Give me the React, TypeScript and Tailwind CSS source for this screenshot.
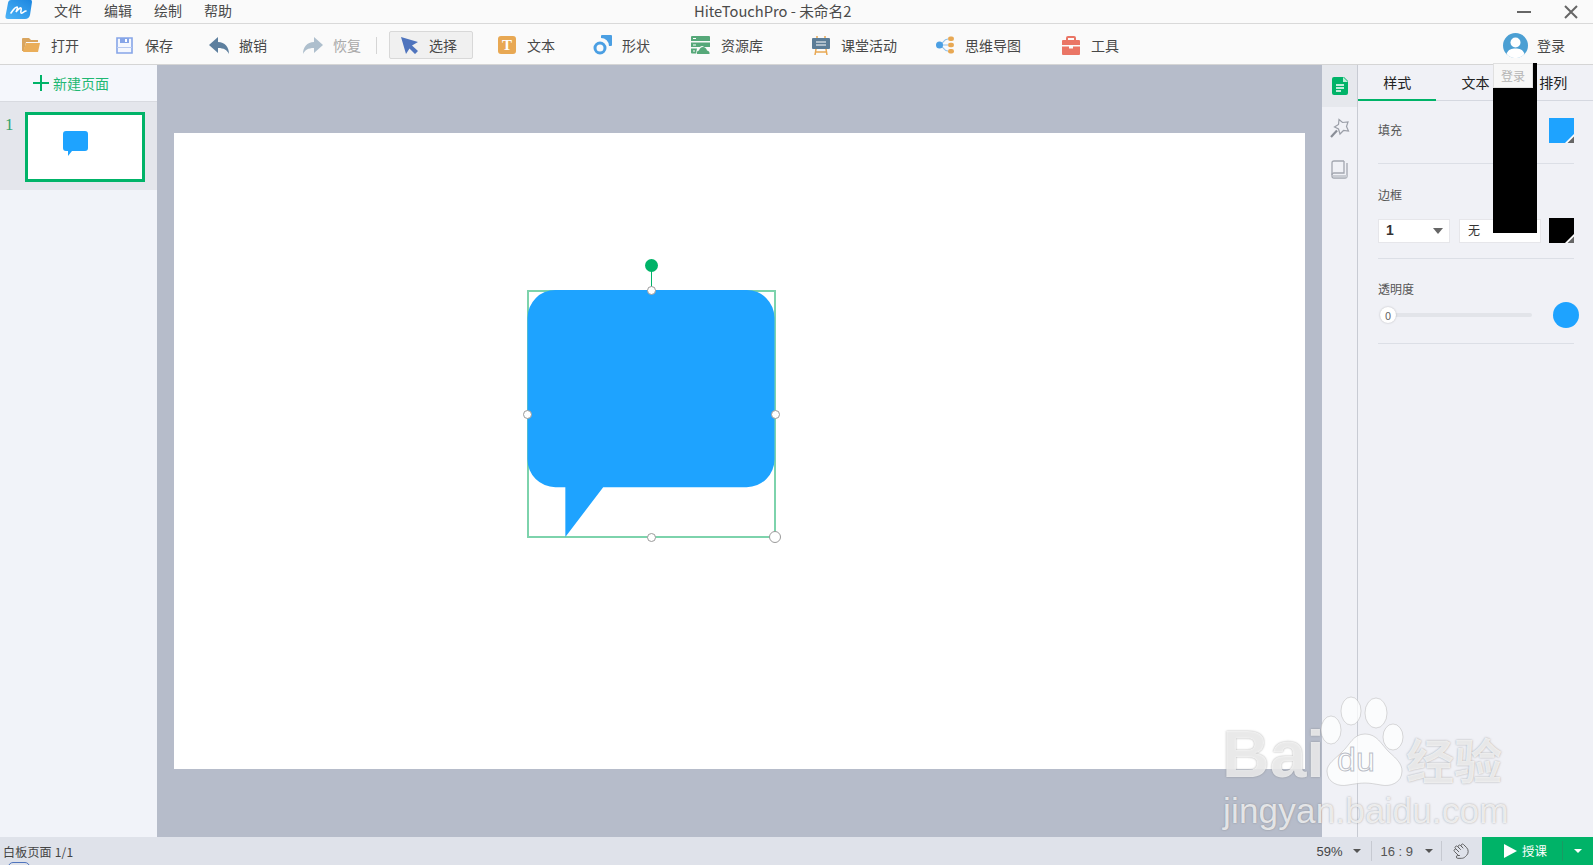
import { Hand } from 'lucide-react'
import type { ReactNode } from 'react'

const Logo = () => (
  <svg width="27" height="20" viewBox="0 0 27 20">
    <defs>
      <linearGradient id="logoFill" x1="0" y1="1" x2="1" y2="0">
        <stop offset="0" stopColor="#4db4f7" />
        <stop offset="1" stopColor="#1c86e0" />
      </linearGradient>
    </defs>
    <path d="M6 0h20q1 0 1 2l-2 13q-1 4-5 4H3q-3 0-2.500-3L3 3q.5-3 3-3z" fill="url(#logoFill)" />
    <path d="M6 13c2-3 4-6 6-6 1 0 0 3-1 5 2-2 4-5 5-4s-1 4 0 5 3-2 5-2" fill="none" stroke="#fff" strokeWidth="1.600" strokeLinecap="round" />
  </svg>
)

const FolderIcon = () => (
  <svg width="18" height="16" viewBox="0 0 18 16">
    <path d="M1 1h6l2 2h7v2H4L2 14H0V2q0-1 1-1z" fill="#d9a55f" />
    <path d="M4 6h14l-2 9H1z" fill="#eaae5a" />
  </svg>
)

const SaveIcon = () => (
  <svg width="17" height="17" viewBox="0 0 17 17">
    <path d="M1 1h15v15H1z" fill="#f4f7fe" stroke="#86a5e8" strokeWidth="1.600" />
    <path d="M4 1h9v5H4z" fill="#86a5e8" />
    <path d="M9 2h2v3H9z" fill="#fff" />
    <path d="M1 10h15v1H1z" fill="#b7c9f0" />
  </svg>
)

const UndoIcon = ({ color, flip }: { color: string; flip?: boolean }) => (
  <svg width="20" height="17" viewBox="0 0 20 17" className={flip ? '-scale-x-100' : ''}>
    <path d="M9 0v5c7 0 11 5 11 12-2-4-5-6-11-6v5L0 8z" fill={color} />
  </svg>
)

const ArrowIcon = () => (
  <svg width="17" height="17" viewBox="0 0 17 17">
    <path d="M0 0l17 5-6 3.500 6 5.500-3 3-5.500-5.500L5 17z" fill="#4f74bd" />
  </svg>
)

const TextIcon = () => (
  <div className="flex h-[18px] w-[18px] items-center justify-center rounded-[3px] bg-[#e8a853] font-['Liberation_Serif',serif] text-[15px] leading-none font-bold text-white">
    T
  </div>
)

const ShapeIcon = () => (
  <svg width="19" height="20" viewBox="0 0 19 20">
    <path d="M8 1q0-1 1-1h9q1 0 1 1v9q0 1-1 1h-2a8 8 0 0 0-8-8z" fill="#4b9fe3" />
    <circle cx="7" cy="13" r="5" fill="none" stroke="#4b9fe3" strokeWidth="3" />
  </svg>
)

const ResourceIcon = () => (
  <svg width="19" height="18" viewBox="0 0 19 18">
    <path d="M0 1q0-1 1-1h17q1 0 1 1v4H0z" fill="#56a879" />
    <path d="M0 6.500h19V11h-6q-2-2-4 0H0z" fill="#56a879" />
    <path d="M0 12.500h6l-1 5H1q-1 0-1-1z" fill="#56a879" />
    <path d="M6 18q-1-3 2-3.500Q9 11 12 11t4 3.500q3 .5 2.500 3.500z" fill="#56a879" />
    <path d="M2 2h3v1H2zM2 8.500h3v1H2zM2 14.500h2v1H2z" fill="#fff" />
  </svg>
)

const BoardIcon = () => (
  <svg width="18" height="19" viewBox="0 0 18 19">
    <path d="M5 0v3M13 0v3" stroke="#e8a853" strokeWidth="1.500" />
    <path d="M1 2h16q1 0 1 1v9q0 1-1 1H1q-1 0-1-1V3q0-1 1-1z" fill="#5c7d97" />
    <path d="M4 5.500h10v1H4zM4 8.500h10v1H4z" fill="#fff" />
    <path d="M4 13l-1 6M14 13l1 6M3 16h12" stroke="#e8a853" strokeWidth="1.500" fill="none" />
  </svg>
)

const MindIcon = () => (
  <svg width="18" height="18" viewBox="0 0 18 18">
    <path d="M3 9c4 0 4-6 9-6M3 9h9M3 9c4 0 4 6 9 6" stroke="#8fc1ea" strokeWidth="1.200" fill="none" />
    <circle cx="3.500" cy="9" r="3.500" fill="#4b9fe3" />
    <rect x="12" y="0.500" width="6" height="4.500" rx="2.200" fill="#e8a853" />
    <rect x="12" y="6.800" width="6" height="4.500" rx="2.200" fill="#e8a853" />
    <rect x="12" y="13" width="6" height="4.500" rx="2.200" fill="#e8a853" />
  </svg>
)

const ToolsIcon = () => (
  <svg width="18" height="19" viewBox="0 0 18 19">
    <path d="M5 5V2q0-1 1-1h6q1 0 1 1v3" fill="none" stroke="#ea7565" strokeWidth="2" />
    <path d="M1 4h16q1 0 1 1v4H0V5q0-1 1-1zM0 10.500h7v2h4v-2h7V18q0 1-1 1H1q-1 0-1-1z" fill="#ea7565" />
  </svg>
)

const UserIcon = () => (
  <svg width="25" height="25" viewBox="0 0 25 25">
    <circle cx="12.500" cy="12.500" r="12.500" fill="#4b9fd3" />
    <circle cx="12.500" cy="9.500" r="5" fill="#fff" />
    <path d="M3.500 21c2-5 5-5.500 9-5.500s7 .5 9 5.500a12 12 0 0 1-18 0z" fill="#fff" />
  </svg>
)

function ToolItem({ icon, label, className, muted }: { icon: ReactNode; label: string; className: string; muted?: boolean }) {
  return (
    <div className={`flex shrink-0 items-center ${className}`}>
      {icon}
      <span className={`text-[14px] ${muted ? 'text-[#a9a9a9]' : 'text-[#484848]'}`}>{label}</span>
    </div>
  )
}

function Swatch({ color }: { color: string }) {
  return (
    <div className={`relative h-[25px] w-[25px] ${color}`}>
      <svg width="9" height="9" viewBox="0 0 9 9" className="absolute right-0 bottom-0">
        <path d="M9 0v9H0z" fill="#fff" />
        <path d="M9 2.500V9H2.500z" fill="#666" />
      </svg>
    </div>
  )
}

const Divider = () => <div className="h-px w-[196px] bg-[#dcdfe6]" />

function SpeechBubble() {
  const handle = 'absolute h-[9px] w-[9px] rounded-full border border-[#9a9a9a] bg-white'
  return (
    <div className="absolute top-[157px] left-[353px] h-[248px] w-[249px] border-2 border-[#7dd3ac]">
      <svg width="248" height="247" viewBox="0 0 248 248" className="absolute -top-[2px] -left-[2px]">
        <path d="M28 0h192a28 28 0 0 1 28 28v142a28 28 0 0 1-28 28H76l-38 50v-50H28a28 28 0 0 1-28-28V28A28 28 0 0 1 28 0z" fill="#1ea3ff" />
      </svg>
      <div className="absolute -top-[33px] left-[116px] h-[13px] w-[13px] rounded-full bg-[#00b368]" />
      <div className="absolute -top-[21px] left-[122px] h-[21px] w-px bg-[#00b368]" />
      <div className={`${handle} -top-[6px] left-[118px]`} />
      <div className={`${handle} top-[118px] -left-[6px]`} />
      <div className={`${handle} top-[118px] -right-[6px]`} />
      <div className={`${handle} -bottom-[6px] left-[118px]`} />
      <div className="absolute -right-[7px] -bottom-[7px] h-[12px] w-[12px] rounded-full border border-[#9a9a9a] bg-white" />
    </div>
  )
}

function Watermark() {
  return (
    <div className="pointer-events-none absolute top-[690px] left-[1220px] h-[150px] w-[290px] font-['Liberation_Sans',sans-serif] text-white/75 [text-shadow:0_0_2px_rgba(110,110,110,0.6)]">
      <svg width="290" height="110" viewBox="0 0 290 110" className="absolute top-0 left-0">
        <g fill="#fff" fillOpacity="0.75" stroke="#999" strokeOpacity="0.35">
          <ellipse cx="111" cy="40" rx="10" ry="14" />
          <ellipse cx="131" cy="21" rx="10" ry="14" />
          <ellipse cx="156" cy="23" rx="11" ry="15" />
          <ellipse cx="173" cy="47" rx="10" ry="13" />
          <path d="M145 44c12 0 16 10 24 18 8 7 13 12 13 19 0 12-12 16-21 14-6-1-11-2-16-2s-11 1-17 2c-9 2-21-2-21-14 0-7 8-12 15-19 8-7 11-18 23-18z" />
        </g>
      </svg>
      <span className="absolute top-[31px] left-[2px] text-[66px] leading-none font-bold">Bai</span>
      <span className="absolute top-[52px] left-[117px] text-[34px] leading-none text-white/40 [-webkit-text-stroke:1px_rgba(140,145,160,0.6)] [text-shadow:none]">du</span>
      <span className="absolute top-[44px] left-[186px] font-['Noto_Sans_CJK_SC',sans-serif] text-[48px] leading-none font-bold">经验</span>
      <span className="absolute top-[103px] left-[3px] text-[35px] leading-none tracking-[0.200px] whitespace-nowrap">jingyan.baidu.com</span>
    </div>
  )
}

export default function App() {
  return (
    <div className="relative flex h-[865px] w-[1593px] flex-col overflow-hidden bg-white font-['Noto_Sans_CJK_SC','Liberation_Sans',sans-serif]">
      {/* title bar */}
      <div className="relative flex h-[24px] shrink-0 items-center border-b border-[#d9d9d9] bg-[#fafafa]">
        <div className="ml-[5px] -mt-[4px]"><Logo /></div>
        <div className="ml-[22px] -mt-[2px] flex gap-[22px] text-[14px] text-[#4a4a4a]">
          <span>文件</span>
          <span>编辑</span>
          <span>绘制</span>
          <span>帮助</span>
        </div>
        <span className="absolute left-[694px] -mt-[1px] text-[14.700px] text-[#4a4a4a]">HiteTouchPro - 未命名2</span>
        <div className="ml-auto flex items-center gap-[33px] pr-[15px]">
          <div className="h-[2px] w-[14px] bg-[#666]" />
          <svg width="14" height="14" viewBox="0 0 14 14">
            <path d="M1 1l12 12M13 1L1 13" stroke="#666" strokeWidth="2" />
          </svg>
        </div>
      </div>

      {/* toolbar */}
      <div className="flex h-[41px] shrink-0 items-center border-b border-[#d5d5d5] bg-[#fafafa] pt-[2px]">
        <ToolItem className="ml-[22px] gap-[11px]" icon={<FolderIcon />} label="打开" />
        <ToolItem className="ml-[37px] gap-[12px]" icon={<SaveIcon />} label="保存" />
        <ToolItem className="ml-[36px] gap-[10px]" icon={<UndoIcon color="#5d7f9e" />} label="撤销" />
        <ToolItem className="ml-[36px] gap-[10px]" muted icon={<UndoIcon color="#aebfcd" flip />} label="恢复" />
        <div className="ml-[15px] h-[17px] w-px bg-[#d5d5d5]" />
        <ToolItem
          className="ml-[12px] h-[28px] w-[84px] gap-[11px] rounded-[2px] border border-[#d8d8d8] bg-[#f0f0f0] pl-[11px]"
          icon={<ArrowIcon />}
          label="选择"
        />
        <ToolItem className="ml-[25px] gap-[11px]" icon={<TextIcon />} label="文本" />
        <ToolItem className="ml-[38px] gap-[10px]" icon={<ShapeIcon />} label="形状" />
        <ToolItem className="ml-[41px] gap-[11px]" icon={<ResourceIcon />} label="资源库" />
        <ToolItem className="ml-[49px] gap-[11px]" icon={<BoardIcon />} label="课堂活动" />
        <ToolItem className="ml-[39px] gap-[11px]" icon={<MindIcon />} label="思维导图" />
        <ToolItem className="ml-[41px] gap-[11px]" icon={<ToolsIcon />} label="工具" />
        <div className="ml-auto flex items-center gap-[9px] pr-[28px]">
          <UserIcon />
          <span className="text-[14px] text-[#484848]">登录</span>
        </div>
      </div>

      {/* main */}
      <div className="flex min-h-0 flex-1">
        {/* page list */}
        <div className="w-[157px] shrink-0 bg-[#f1f3f9]">
          <div className="flex h-[37px] items-center gap-[4px] border-b border-[#d8dae0] bg-[#f5f7fc] pl-[33px]">
            <svg width="16" height="16" viewBox="0 0 16 16">
              <path d="M8 0v16M0 8h16" stroke="#00b368" strokeWidth="2" />
            </svg>
            <span className="text-[14px] text-[#1fb873]">新建页面</span>
          </div>
          <div className="flex h-[88px] items-center bg-[#e4e6ec] pt-[2px] pl-[5px]">
            <span className="mb-[45px] w-[20px] font-['Liberation_Serif',serif] text-[17px] leading-[20px] text-[#35a36c]">1</span>
            <div className="h-[70px] w-[120px] border-[3px] border-[#00b368] bg-white pt-[16px] pl-[35px]">
              <svg width="25" height="25" viewBox="0 0 25 25">
                <path d="M3 0h19q3 0 3 3v14q0 3-3 3H9l-4 5v-5H3q-3 0-3-3V3q0-3 3-3z" fill="#1ea3ff" />
              </svg>
            </div>
          </div>
        </div>

        {/* canvas */}
        <div className="min-w-0 flex-1 bg-[#b6bcca] pt-[68px] pl-[17px]">
          <div className="relative h-[636px] w-[1131px] bg-white">
            <SpeechBubble />
          </div>
        </div>

        {/* icon strip */}
        <div className="flex w-[36px] shrink-0 flex-col items-center border-r border-[#c8cbd3] bg-[#f0f1f6]">
          <div className="flex h-[42px] w-full items-center justify-center bg-[#e6e8ed]">
            <svg width="16" height="18" viewBox="0 0 16 18">
              <path d="M2 0h10l4 4v12q0 2-2 2H2q-2 0-2-2V2q0-2 2-2z" fill="#00b368" />
              <path d="M4 8h8M4 11h8M4 14h5" stroke="#fff" strokeWidth="1.300" />
              <path d="M11 0l5 5h-5z" fill="#bfeeda" />
            </svg>
          </div>
          <svg width="20" height="20" viewBox="0 0 20 20" className="mt-[11px]">
            <path d="M9 1.500l3.500 3 5.500-.5-1.500 4.500 2 4.500-5-.5-3.500 3.500-1.500-5-4-2 4-2.500z" fill="none" stroke="#9b9fa8" strokeWidth="1.200" />
            <path d="M7 12.500l-6 6.500" stroke="#8a8e97" strokeWidth="2.200" />
          </svg>
          <svg width="17" height="19" viewBox="0 0 17 19" className="mt-[22px]">
            <path d="M13 1H3q-2 0-2 2v13q0 2 2 2h11q2 0 2-2V3" fill="none" stroke="#a3a7b0" strokeWidth="1.300" />
            <path d="M13 1v12H3q-2 0-2 2" fill="none" stroke="#a3a7b0" strokeWidth="1.300" />
            <path d="M2 15h14v2.500H2z" fill="#c9ccd3" />
          </svg>
        </div>

        {/* properties */}
        <div className="w-[235px] shrink-0 bg-[#f0f1f6]">
          <div className="grid h-[36px] grid-cols-3 border-b border-[#d5d8e0] text-[14px] text-[#222]">
            <div className="-mb-px flex items-center justify-center border-b-2 border-[#00b368]">样式</div>
            <div className="flex items-center justify-center">文本</div>
            <div className="-ml-[1px] flex items-center justify-center">排列</div>
          </div>
          <div className="flex flex-col pl-[20px] text-[12px] text-[#555]">
            <div className="flex h-[62px] items-center justify-between pr-[19px] pb-[4px]">
              <span>填充</span>
              <Swatch color="bg-[#1ea3ff]" />
            </div>
            <Divider />
            <div className="mt-[21px] leading-[20px]">边框</div>
            <div className="mt-[13px] flex items-center">
              <div className="flex h-[24px] w-[72px] items-center justify-between border border-[#e6e6ea] bg-white pr-[6px] pl-[7px] font-['Liberation_Sans',sans-serif] text-[14px] font-bold text-[#333]">
                <span>1</span>
                <div className="h-0 w-0 border-x-[5px] border-t-[6px] border-x-transparent border-t-[#666]" />
              </div>
              <div className="ml-[9px] flex h-[24px] w-[82px] items-center border border-[#e6e6ea] bg-white pb-[2px] pl-[8px] text-[12px] text-[#333]">无</div>
              <div className="ml-[8px]"><Swatch color="bg-black" /></div>
            </div>
            <div className="mt-[15px]"><Divider /></div>
            <div className="mt-[20px] leading-[20px]">透明度</div>
            <div className="mt-[3px] flex h-[26px] items-center">
              <div className="relative ml-[2px] h-[4px] w-[152px] rounded-full bg-[#e2e4e9]">
                <div className="absolute -top-[6px] left-0 flex h-[16px] w-[16px] items-center justify-center rounded-full bg-white text-[11px] text-[#666] shadow-[0_0_2px_rgba(0,0,0,0.25)]">0</div>
              </div>
              <div className="ml-[21px] h-[26px] w-[26px] rounded-full bg-[#1ea3ff]" />
            </div>
            <div className="mt-[15px]"><Divider /></div>
          </div>
        </div>
      </div>

      {/* status bar */}
      <div className="relative flex h-[28px] shrink-0 items-center bg-[#dfe2ea] text-[12px] text-[#444]">
        <span className="pt-[2px] pl-[3px] tracking-[0.200px]">白板页面 1/1</span>
        <div className="absolute -bottom-[7px] left-[8px] h-[10px] w-[22px] rounded-full border border-[#4f74bd]" />
        <div className="ml-auto flex items-center">
          <span className="pt-px font-['Liberation_Sans',sans-serif] text-[13px]">59%</span>
          <div className="ml-[11px] h-0 w-0 border-x-[4px] border-t-[4px] border-x-transparent border-t-[#555]" />
          <div className="ml-[10px] h-[20px] w-px bg-[#c6c9d1]" />
          <span className="ml-[8px] pt-px font-['Liberation_Sans',sans-serif] text-[13px] text-[#555]">16 : 9</span>
          <div className="ml-[12px] h-0 w-0 border-x-[4px] border-t-[4px] border-x-transparent border-t-[#555]" />
          <div className="ml-[8px] h-[20px] w-px bg-[#c6c9d1]" />
          <Hand size={17} strokeWidth={1.200} className="ml-[10px] mr-[2px] -rotate-45 text-[#555]" />
          <div className="ml-[11px] flex h-[28px] w-[111px] items-center bg-[#00b368] text-white">
            <svg width="13" height="14" viewBox="0 0 13 14" className="ml-[22px]">
              <path d="M0 0l13 7-13 7z" fill="#fff" />
            </svg>
            <span className="ml-[5px] pt-px text-[12.500px]">授课</span>
            <div className="ml-[15px] h-[20px] w-px bg-[#1a9a63]" />
            <div className="ml-[11px] h-0 w-0 border-x-[4px] border-t-[4px] border-x-transparent border-t-white" />
          </div>
        </div>
      </div>

      {/* 登录 tooltip sitting on a black block */}
      <div className="absolute top-[63px] left-[1493px] h-[170px] w-[44px] bg-black">
        <div className="flex h-[25px] w-[40px] items-center justify-center border border-[#e0e0e0] bg-[#f7f7f7] text-[12px] text-[#b5b5b5]">登录</div>
      </div>

      <Watermark />
    </div>
  )
}
